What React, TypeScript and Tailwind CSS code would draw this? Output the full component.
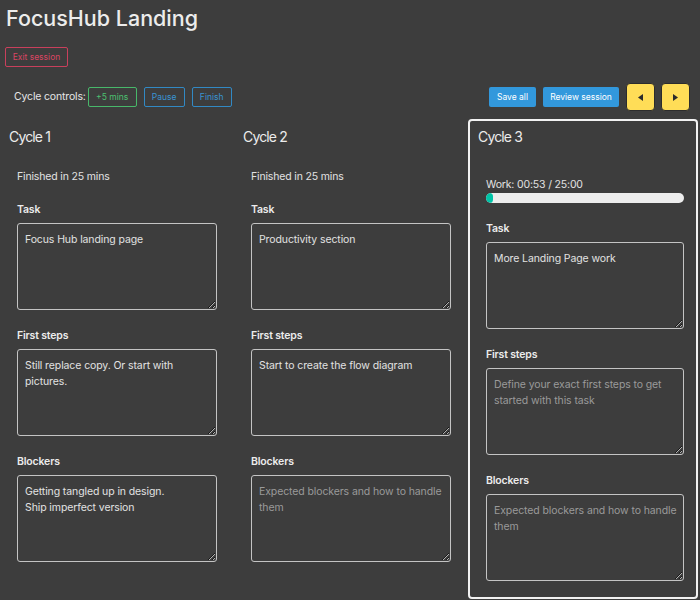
import React from 'react';

type Cycle = {
  id: number;
  finished: boolean;
  task: string;
  firstSteps: string;
  blockers: string;
};

const CYCLES: Cycle[] = [
  {
    id: 1,
    finished: true,
    task: 'Focus Hub landing page',
    firstSteps: 'Still replace copy. Or start with pictures.',
    blockers: 'Getting tangled up in design.\nShip imperfect version',
  },
  {
    id: 2,
    finished: true,
    task: 'Productivity section',
    firstSteps: 'Start to create the flow diagram',
    blockers: '',
  },
  {
    id: 3,
    finished: false,
    task: 'More Landing Page work',
    firstSteps: '',
    blockers: '',
  },
];

const Field: React.FC<{ label: string; value: string; placeholder: string; wide: boolean }> = ({
  label,
  value,
  placeholder,
  wide,
}) => (
  <div className="mt-[19px]">
    <div className="text-[10.5px] leading-[14px] font-semibold text-[#ececec]">{label}</div>
    <textarea
      defaultValue={value}
      placeholder={placeholder}
      className={`mt-[6px] block h-[87px] ${wide ? 'w-[200px]' : 'w-[198px]'} rounded-[3px] border border-[#c4c4c4] bg-transparent pl-[7px] pr-[3px] pt-[8px] text-[10.5px] leading-[16px] tracking-[-0.01em] text-[#e2e2e2] placeholder:text-[#9a9a9a] outline-none`}
    />
  </div>
);

const CycleColumn: React.FC<{ cycle: Cycle; active: boolean }> = ({ cycle, active }) => (
  <div
    className={
      active
        ? 'w-[230px] rounded-[4px] border-2 border-[#f2f2f2] px-[8px] pt-[6px] pb-[16px]'
        : 'flex-1 px-[9px] pt-[8px]'
    }
  >
    <h2 className="text-[14px] leading-[20px] tracking-[-0.06em] text-[#ececec]">Cycle {cycle.id}</h2>
    <div className="px-[8px]">
      {cycle.finished ? (
        <p className="mt-[23px] text-[10.5px] leading-[14px] text-[#e2e2e2]">Finished in 25 mins</p>
      ) : (
        <div className="mt-[31px]">
          <p className="text-[10.5px] leading-[14px] text-[#e2e2e2]">Work: 00:53 / 25:00</p>
          <div className="mt-[1px] h-[10px] w-[198px] overflow-hidden rounded-full bg-[#ededed]">
            <div className="h-full rounded-full bg-[#00c4a7]" style={{ width: `${(53 / 1500) * 100}%` }} />
          </div>
        </div>
      )}
      <Field label="Task" value={cycle.task} placeholder="What are you working on?" wide={!active} />
      <Field
        label="First steps"
        value={cycle.firstSteps}
        placeholder="Define your exact first steps to get started with this task"
        wide={!active}
      />
      <Field
        label="Blockers"
        value={cycle.blockers}
        placeholder="Expected blockers and how to handle them"
        wide={!active}
      />
    </div>
  </div>
);

const App: React.FC = () => {
  return (
    <div className="min-h-screen bg-[#3d3d3d] font-['Inter',sans-serif] tracking-[-0.01em] text-[#e6e6e6]">
      <h1 className="pl-[6px] pt-[4px] text-[21.5px] leading-[28px] font-medium tracking-normal text-[#ececec]">
        FocusHub Landing
      </h1>

      <button className="ml-[5px] mt-[15px] h-[20px] w-[63px] rounded-[2px] border border-[#c9405c] text-[8.5px] tracking-normal text-[#d94563]">
        Exit session
      </button>

      {/* Controls */}
      <div className="mt-[16px] flex items-center justify-between pr-[10px]">
        <div className="flex items-center pl-[14px]">
          <span className="mr-[2px] text-[10.5px] text-[#e6e6e6]">Cycle controls:</span>
          <div className="flex gap-[7px] tracking-normal">
            <button className="h-[20px] w-[49px] rounded-[2px] border border-[#48b86a] text-[8.5px] text-[#4cc070]">
              +5 mins
            </button>
            <button className="h-[20px] w-[41px] rounded-[2px] border border-[#3289c4] text-[8.5px] text-[#3a94d2]">
              Pause
            </button>
            <button className="h-[20px] w-[40px] rounded-[2px] border border-[#3289c4] text-[8.5px] text-[#3a94d2]">
              Finish
            </button>
          </div>
        </div>
        <div className="flex items-center gap-[7px] tracking-normal">
          <button className="h-[20px] w-[47px] rounded-[2px] bg-[#3298dc] text-[8.5px] text-white">Save all</button>
          <button className="h-[20px] w-[76px] rounded-[2px] bg-[#3298dc] text-[8.5px] text-white">Review session</button>
          <div className="flex gap-[6px]">
            <button className="flex h-[28px] w-[29px] items-center justify-center rounded-[4px] border border-[#2c2c2c] bg-[#ffdd57]">
              <svg width="5" height="7" viewBox="0 0 5 7">
                <polygon points="5,0 0,3.5 5,7" fill="#2b2b2b" />
              </svg>
            </button>
            <button className="flex h-[28px] w-[29px] items-center justify-center rounded-[4px] border border-[#2c2c2c] bg-[#ffdd57]">
              <svg width="5" height="7" viewBox="0 0 5 7">
                <polygon points="0,0 5,3.5 0,7" fill="#2b2b2b" />
              </svg>
            </button>
          </div>
        </div>
      </div>

      {/* Cycles */}
      <div className="mt-[8px] flex pr-[3px]">
        {CYCLES.map((c) => (
          <CycleColumn key={c.id} cycle={c} active={!c.finished} />
        ))}
      </div>
    </div>
  );
};

export default App;
